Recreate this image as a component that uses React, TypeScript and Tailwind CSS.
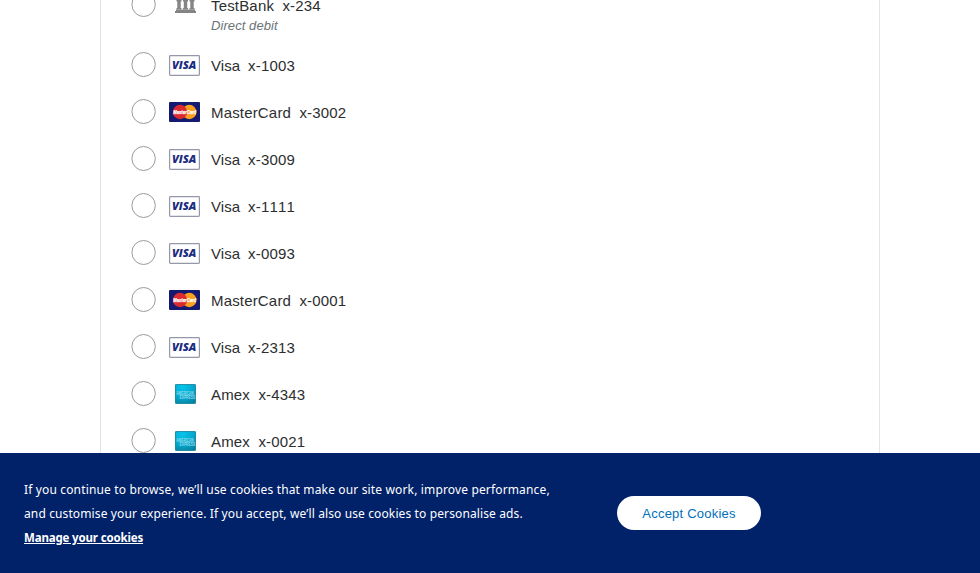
import React from "react";

type Kind = "visa" | "mastercard" | "amex";

const methods: { kind: Kind; name: string; digits: string }[] = [
  { kind: "visa", name: "Visa", digits: "x-1003" },
  { kind: "mastercard", name: "MasterCard", digits: "x-3002" },
  { kind: "visa", name: "Visa", digits: "x-3009" },
  { kind: "visa", name: "Visa", digits: "x-1111" },
  { kind: "visa", name: "Visa", digits: "x-0093" },
  { kind: "mastercard", name: "MasterCard", digits: "x-0001" },
  { kind: "visa", name: "Visa", digits: "x-2313" },
  { kind: "amex", name: "Amex", digits: "x-4343" },
  { kind: "amex", name: "Amex", digits: "x-0021" },
];

function Radio() {
  return (
    <svg className="shrink-0" width="25" height="25" viewBox="0 0 25 25">
      <ellipse cx="12.600" cy="12.500" rx="11.700" ry="12" fill="#fff" stroke="#959ca1" strokeWidth="1" />
    </svg>
  );
}

function VisaIcon() {
  return (
    <svg className="relative top-px" width="31" height="21" viewBox="0 0 31 21">
      <rect x="0.600" y="0.600" width="29.800" height="19.800" rx="0.800" fill="#fff" stroke="#9498a8" strokeWidth="1.200" />
      <text x="3.600" y="14" fontFamily="Open Sans, sans-serif" fontSize="10.800" fontWeight="800" fontStyle="italic" fill="#1a2c80" transform="translate(-0.900 0) scale(1.070 1)" textLength="22.800" lengthAdjust="spacingAndGlyphs">
        VISA
      </text>
    </svg>
  );
}

function MasterCardIcon() {
  return (
    <svg width="31" height="20" viewBox="0 0 31 20">
      <rect width="31" height="20" rx="1" fill="#131a70" />
      <circle cx="20.300" cy="10" r="7.200" fill="#f9a01f" />
      <circle cx="11" cy="10" r="7.200" fill="#dc2b30" />
      <path d="M15.650 4.500a7.200 7.200 0 0 1 0 11" fill="none" stroke="#ee6a2a" strokeWidth="0.600" />
      <text x="4.300" y="12.100" fontFamily="Liberation Sans, sans-serif" fontSize="5.600" fontWeight="700" fontStyle="italic" fill="#fff" stroke="#fff" strokeWidth="0.250" textLength="22.800" lengthAdjust="spacingAndGlyphs">
        MasterCard
      </text>
    </svg>
  );
}

function AmexIcon() {
  return (
    <svg className="relative left-px" width="21" height="20" viewBox="0 0 21 20">
      <defs>
        <radialGradient id="amexFill" cx="35%" cy="15%" r="95%">
          <stop offset="0" stopColor="#04c4ec" />
          <stop offset="0.6" stopColor="#05a6cc" />
          <stop offset="1" stopColor="#05819f" />
        </radialGradient>
      </defs>
      <rect x="0.400" y="0.400" width="20.200" height="19.200" rx="0.800" fill="url(#amexFill)" stroke="#04748f" strokeWidth="0.800" />
      <g fontFamily="Liberation Sans, sans-serif" fontSize="4.600" fontWeight="700" fill="#8fd8e8">
        <text x="1.200" y="10.700" textLength="17.500" lengthAdjust="spacingAndGlyphs">AMERICAN</text>
        <text x="4.500" y="14.800" textLength="15.600" lengthAdjust="spacingAndGlyphs">EXPRESS</text>
      </g>
    </svg>
  );
}

function BankIcon() {
  return (
    <svg className="relative left-px" width="21" height="20" viewBox="0 0 21 20" fill="#848484">
      <path d="M10.500 0 21 4v2H0V4z" />
      <path d="M1.500 7h5v1.500h-.8v6.500h.8v1.500h-5V15h.8V8.500h-.8zM8 7h5v1.500h-.8v6.500h.8v1.500H8V15h.8V8.500H8zM14.500 7h5v1.500h-.8v6.500h.8v1.500h-5V15h.8V8.500h-.8z" />
      <path d="M1 16.500h19V18h1v2H0v-2h1z" />
    </svg>
  );
}

const icons = { visa: VisaIcon, mastercard: MasterCardIcon, amex: AmexIcon };

function Label({ name, digits }: { name: string; digits: string }) {
  return (
    <span className="flex text-[15px] leading-5 text-[#2c2e2f]">
      <span className={name === "Visa" ? "mr-2 tracking-[0.05px]" : "mr-[8.400px] tracking-[0.170px]"}>{name}</span>
      <span className="tracking-[0.170px] [font-kerning:none]">{digits}</span>
    </span>
  );
}

export default function App() {
  return (
    <div className="flex h-screen flex-col overflow-hidden bg-white font-['Liberation_Sans',Arial,sans-serif]">
      <main className="mx-auto min-h-0 w-[780px] flex-1 overflow-hidden border-x border-[#e2e4e6] pl-[30px]">
        <div className="flex h-[41px] items-end">
          <div className="mb-6 flex shrink-0">
            <Radio />
          </div>
          <div className="mb-[28px] ml-3 flex w-[33px] shrink-0 justify-center">
            <BankIcon />
          </div>
          <div className="mb-[6px] ml-[10px]">
            <Label name="TestBank" digits="x-234" />
            <div className="text-[13px] leading-[19px] tracking-[0.08px] text-[#6c7378] italic">Direct debit</div>
          </div>
        </div>
        {methods.map(({ kind, name, digits }) => {
          const Icon = icons[kind];
          return (
            <label key={digits} className="flex h-[47px] items-center">
              <Radio />
              <span className="ml-3 flex w-[33px] shrink-0 justify-center">
                <Icon />
              </span>
              <span className="ml-[10px] pt-[2px]">
                <Label name={name} digits={digits} />
              </span>
            </label>
          );
        })}
      </main>
      <footer className="flex h-[120px] shrink-0 items-center bg-[#012169] pl-6 text-white">
        <div className="w-[593px] pt-[2px] font-['Noto_Sans',sans-serif] text-[12px] leading-6 whitespace-nowrap">
          <p className="tracking-[0.15px]">
            If you continue to browse, we’ll use cookies that make our site work, improve performance,
          </p>
          <p className="tracking-[0.12px]">
            and customise your experience. If you accept, we’ll also use cookies to personalise ads.
          </p>
          <a className="text-[11.500px] font-bold tracking-[-0.160px] underline">Manage your cookies</a>
        </div>
        <button className="h-[34px] w-[144px] rounded-full bg-white pt-px text-[13px] tracking-[0.22px] text-[#0070ba]">
          Accept Cookies
        </button>
      </footer>
    </div>
  );
}
